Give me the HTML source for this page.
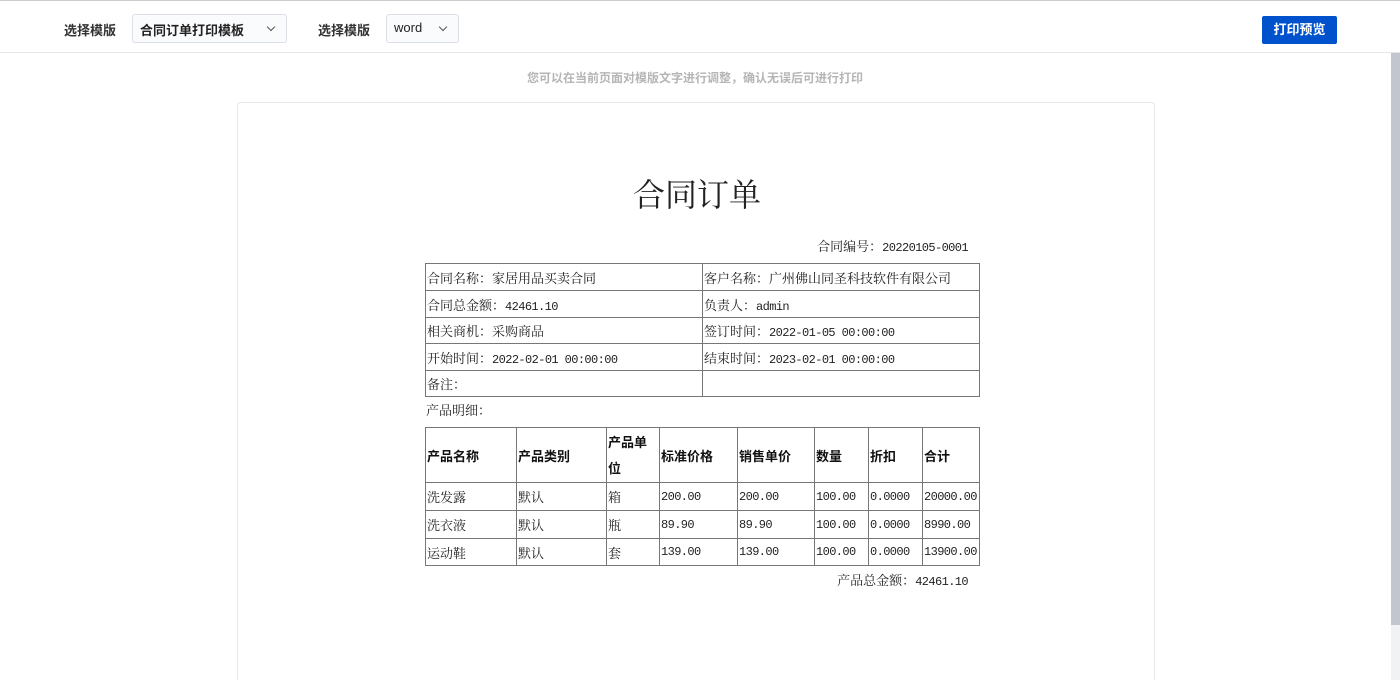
<!DOCTYPE html>
<html><head><meta charset="utf-8"><style>
*{margin:0;padding:0;box-sizing:border-box}
html{height:680px;overflow:hidden}
body{width:1400px;height:680px;overflow:hidden;background:#fff;font-family:"Liberation Sans","Noto Sans CJK SC",sans-serif;position:relative}
.a{position:absolute}
.hdr{left:0;top:0;width:1400px;height:53px;border-top:1px solid #ccc;border-bottom:1px solid #e6e6e6;background:#fff}
.lbl{font-size:13px;color:#333;font-weight:bold;top:20px}
.sel{top:14px;height:29px;border:1px solid #dcdfe6;border-radius:3px;background:#fafbfd;font-size:13px;color:#222;padding:5px 7px;font-weight:bold}
.chev{position:absolute;right:12px;top:9px;width:6px;height:6px;border-right:1.2px solid #555;border-bottom:1.2px solid #555;transform:rotate(45deg)}
.btn{left:1262px;top:16px;width:75px;height:28px;background:#0052cc;border-radius:2px;color:#fff;font-size:13px;font-weight:bold;text-align:center;line-height:28px}
.sb{left:1391px;top:53px;width:9px;height:572px;background:#c1c6cf}
.sbt{left:1391px;top:625px;width:9px;height:55px;background:#f1f2f4}
.tip{left:0;width:1390px;top:69px;text-align:center;font-size:12px;color:#b5b5b5;font-weight:bold}
.card{left:237px;top:102px;width:918px;height:578px;border:1px solid #e8e8e8;border-bottom:none;border-radius:4px 4px 0 0}
.doc{font-family:"Noto Serif CJK SC","Liberation Serif",serif;color:#222;font-size:13px}
.n{font-family:"Liberation Mono",monospace;font-size:12px;letter-spacing:-0.6px}
table{border-collapse:collapse;position:absolute;table-layout:fixed}
td{border:1px solid #777;padding:0 1px;font-size:13px;font-family:"Noto Serif CJK SC",serif;color:#222;white-space:nowrap;overflow:hidden}
th{border:1px solid #777;padding:0 1px;font-size:13px;font-family:"Noto Sans CJK SC",sans-serif;font-weight:bold;text-align:left;color:#111;line-height:27px}
</style></head><body>
<div class="a hdr"></div>
<div class="a lbl" style="left:64px">选择模版</div>
<div class="a sel" style="left:132px;width:155px">合同订单打印模板<span class="chev"></span></div>
<div class="a lbl" style="left:318px">选择模版</div>
<div class="a sel" style="left:386px;width:73px;font-weight:normal">word<span class="chev"></span></div>
<div class="a btn">打印预览</div>
<div class="a sb"></div><div class="a sbt"></div>
<div class="a tip">您可以在当前页面对模版文字进行调整，确认无误后可进行打印</div>
<div class="a card"></div>
<div class="a doc" style="left:420px;width:554px;top:168px;text-align:center;font-size:32px;line-height:50px">合同订单</div>
<div class="a doc" style="left:700px;width:268px;top:236px;text-align:right">合同编号：<span class="n">20220105-0001</span></div>
<table style="left:425px;top:263px;width:554px">
<colgroup><col style="width:277px"><col style="width:277px"></colgroup>
<tr style="height:27px"><td>合同名称：家居用品买卖合同</td><td>客户名称：广州佛山同圣科技软件有限公司</td></tr>
<tr style="height:27px"><td>合同总金额：<span class="n">42461.10</span></td><td>负责人：<span class="n">admin</span></td></tr>
<tr style="height:26px"><td>相关商机：采购商品</td><td>签订时间：<span class="n">2022-01-05 00:00:00</span></td></tr>
<tr style="height:27px"><td>开始时间：<span class="n">2022-02-01 00:00:00</span></td><td>结束时间：<span class="n">2023-02-01 00:00:00</span></td></tr>
<tr style="height:26px"><td>备注：</td><td></td></tr>
</table>
<div class="a doc" style="left:426px;top:400px">产品明细：</div>
<table style="left:425px;top:427px;width:554px">
<colgroup><col style="width:91px"><col style="width:90px"><col style="width:53px"><col style="width:78px"><col style="width:77px"><col style="width:54px"><col style="width:54px"><col style="width:57px"></colgroup>
<tr style="height:55px"><th>产品名称</th><th>产品类别</th><th style="white-space:normal;line-height:26px">产品单位</th><th>标准价格</th><th>销售单价</th><th>数量</th><th>折扣</th><th>合计</th></tr>
<tr style="height:28px"><td>洗发露</td><td>默认</td><td>箱</td><td class="n">200.00</td><td class="n">200.00</td><td class="n">100.00</td><td class="n">0.0000</td><td class="n">20000.00</td></tr>
<tr style="height:28px"><td>洗衣液</td><td>默认</td><td>瓶</td><td class="n">89.90</td><td class="n">89.90</td><td class="n">100.00</td><td class="n">0.0000</td><td class="n">8990.00</td></tr>
<tr style="height:27px"><td>运动鞋</td><td>默认</td><td>套</td><td class="n">139.00</td><td class="n">139.00</td><td class="n">100.00</td><td class="n">0.0000</td><td class="n">13900.00</td></tr>
</table>
<div class="a doc" style="left:700px;width:268px;top:570px;text-align:right">产品总金额：<span class="n">42461.10</span></div>
</body></html>
